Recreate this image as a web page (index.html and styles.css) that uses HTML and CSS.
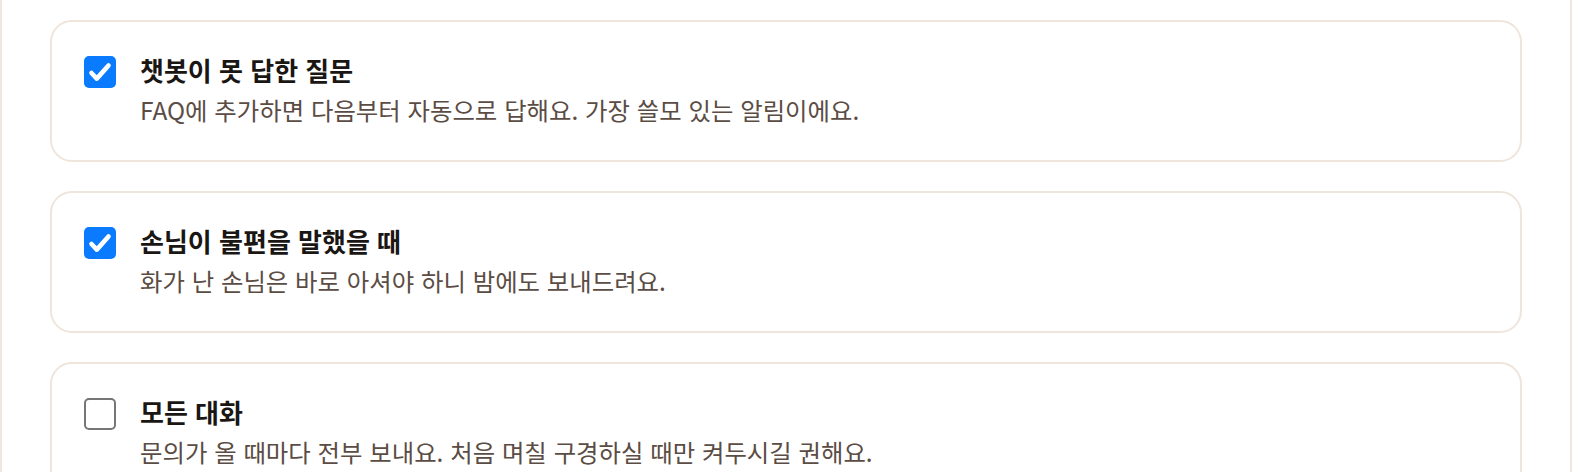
FILE: index.html
```html
<!DOCTYPE html>
<html lang="ko">
<head>
<meta charset="utf-8">
<title>알림 설정</title>
<link rel="stylesheet" href="styles.css">
</head>
<body>
<div class="page">
  <div class="card">
    <span class="box checked"><svg viewBox="0 0 32 32" width="32" height="32"><path d="M7.5 17 L12.8 22.6 L24.5 9.5" fill="none" stroke="#fff" stroke-width="4.6" stroke-linecap="round" stroke-linejoin="round"/></svg></span>
    <div class="text">
      <div class="title">챗봇이 못 답한 질문</div>
      <div class="desc">FAQ에 추가하면 다음부터 자동으로 답해요. 가장 쓸모 있는 알림이에요.</div>
    </div>
  </div>
  <div class="card">
    <span class="box checked"><svg viewBox="0 0 32 32" width="32" height="32"><path d="M7.5 17 L12.8 22.6 L24.5 9.5" fill="none" stroke="#fff" stroke-width="4.6" stroke-linecap="round" stroke-linejoin="round"/></svg></span>
    <div class="text">
      <div class="title">손님이 불편을 말했을 때</div>
      <div class="desc">화가 난 손님은 바로 아셔야 하니 밤에도 보내드려요.</div>
    </div>
  </div>
  <div class="card">
    <span class="box"></span>
    <div class="text">
      <div class="title">모든 대화</div>
      <div class="desc">문의가 올 때마다 전부 보내요. 처음 며칠 구경하실 때만 켜두시길 권해요.</div>
    </div>
  </div>
</div>
</body>
</html>
```
FILE: styles.css
```css
html, body {
  margin: 0;
  padding: 0;
  background: #ffffff;
  overflow: hidden;
}
body {
  font-family: "Noto Sans CJK KR", "Noto Sans", sans-serif;
}
.page {
  box-sizing: border-box;
  border-left: 2px solid #f0e6dd;
  border-right: 2px solid #f0e6dd;
  padding: 20px 48px 40px 48px;
  display: flex;
  flex-direction: column;
  gap: 29px;
}
.card {
  box-sizing: border-box;
  border: 2px solid #efe5db;
  border-radius: 22px;
  padding: 34px 32px 0 32px;
  height: 142px;
  flex: none;
  display: flex;
  align-items: flex-start;
  gap: 24px;
  background: #fff;
}
.box {
  flex: none;
  box-sizing: border-box;
  width: 32px;
  height: 32px;
  border-radius: 5px;
  border: 2px solid #767676;
  background: #fff;
  display: block;
}
.box.checked {
  border: none;
  background: #0a7bff;
}
.box svg {
  display: block;
}
.text {
  display: flex;
  flex-direction: column;
  margin-top: -1px;
}
.title {
  font-size: 26px;
  font-weight: 700;
  line-height: 30px;
  color: #1a1613;
}
.desc {
  margin-top: 8px;
  font-size: 24.4px;
  line-height: 34px;
  color: #5b4c44;
}
```
